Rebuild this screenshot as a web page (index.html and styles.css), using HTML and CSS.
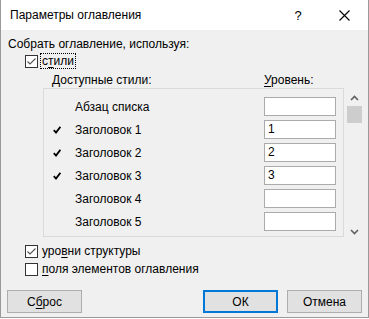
FILE: index.html
```html
<!DOCTYPE html>
<html lang="ru">
<head>
    <meta charset="UTF-8">
    <title>Параметры оглавления</title>
    <link rel="stylesheet" href="styles.css">
</head>
<body>
    <div class="dialog">
        <div class="titlebar">
            <span class="title">Параметры оглавления</span>
            <span class="tb-btn help">?</span>
            <span class="tb-btn close">
                <svg width="11" height="11" viewBox="0 0 11 11"><path d="M0.5 0.5 L10.5 10.5 M10.5 0.5 L0.5 10.5" stroke="#000" stroke-width="1.1" fill="none"/></svg>
            </span>
        </div>

        <div class="content">
            <div class="caption">Собрать оглавление, используя:</div>

            <div class="check-row first">
                <span class="checkbox checked">
                    <svg width="11" height="11" viewBox="0 0 11 11"><path d="M1.5 5.5 L4 8 L9.5 2.5" stroke="#555" stroke-width="1.1" fill="none"/></svg>
                </span>
                <span class="label focus">с<u>т</u>или</span>
            </div>

            <div class="panel-head">
                <span class="head-styles">Доступные стили:</span>
                <span class="head-level"><u>У</u>ровень:</span>
            </div>

            <div class="panel-wrap">
                <div class="panel">
                    <div class="style-row"><span class="mark"></span><span class="name">Абзац списка</span><span class="level"></span></div>
                    <div class="style-row"><span class="mark"><svg width="8" height="8" viewBox="0 0 8 8"><path d="M0.8 4.2 L3 6.6 L7.4 0.8" stroke="#000" stroke-width="1.8" fill="none"/></svg></span><span class="name">Заголовок 1</span><span class="level">1</span></div>
                    <div class="style-row"><span class="mark"><svg width="8" height="8" viewBox="0 0 8 8"><path d="M0.8 4.2 L3 6.6 L7.4 0.8" stroke="#000" stroke-width="1.8" fill="none"/></svg></span><span class="name">Заголовок 2</span><span class="level">2</span></div>
                    <div class="style-row"><span class="mark"><svg width="8" height="8" viewBox="0 0 8 8"><path d="M0.8 4.2 L3 6.6 L7.4 0.8" stroke="#000" stroke-width="1.8" fill="none"/></svg></span><span class="name">Заголовок 3</span><span class="level">3</span></div>
                    <div class="style-row"><span class="mark"></span><span class="name">Заголовок 4</span><span class="level"></span></div>
                    <div class="style-row"><span class="mark"></span><span class="name">Заголовок 5</span><span class="level"></span></div>
                </div>
                <div class="scrollbar">
                    <svg class="arrow" width="9" height="6" viewBox="0 0 9 6"><path d="M1 5 L4.5 1.5 L8 5" stroke="#606060" stroke-width="1.6" fill="none"/></svg>
                    <div class="thumb"></div>
                    <div class="track"></div>
                    <svg class="arrow" width="9" height="6" viewBox="0 0 9 6"><path d="M1 1 L4.5 4.5 L8 1" stroke="#606060" stroke-width="1.6" fill="none"/></svg>
                </div>
            </div>

            <div class="check-row">
                <span class="checkbox checked">
                    <svg width="11" height="11" viewBox="0 0 11 11"><path d="M1.5 5.5 L4 8 L9.5 2.5" stroke="#555" stroke-width="1.1" fill="none"/></svg>
                </span>
                <span class="label">уро<u>в</u>ни структуры</span>
            </div>
            <div class="check-row">
                <span class="checkbox"></span>
                <span class="label"><u>п</u>оля элементов оглавления</span>
            </div>

            <div class="buttons">
                <button class="btn">С<u>б</u>рос</button>
                <span class="spacer"></span>
                <button class="btn default">ОК</button>
                <button class="btn">Отмена</button>
            </div>
        </div>
    </div>
</body>
</html>
```

FILE: styles.css
```css
/* Base */
* {
    margin: 0;
    padding: 0;
    box-sizing: border-box;
}

body {
    font-family: "Liberation Sans", "Segoe UI", sans-serif;
    font-size: 12px;
    color: #000;
    background: #fff;
}

u {
    text-decoration: underline;
    text-underline-offset: 2px;
}

/* Window */
.dialog {
    width: 369px;
    height: 318px;
    background: #f0f0f0;
    border: 1px solid #9a9a9a;
    border-top: none;
    display: flex;
    flex-direction: column;
}

.titlebar {
    height: 30px;
    background: #fff;
    display: flex;
    align-items: center;
}

.title {
    flex: 1;
    padding-left: 9px;
}

.tb-btn {
    display: flex;
    align-items: center;
    justify-content: center;
}

.help {
    width: 20px;
    margin-right: 26px;
    font-size: 13px;
}

.close {
    width: 20px;
    margin-right: 14px;
}

/* Content */
.content {
    flex: 1;
    display: flex;
    flex-direction: column;
}

.caption {
    height: 16px;
    line-height: 16px;
    margin-top: 6px;
    padding-left: 7px;
}

.check-row {
    height: 18px;
    display: flex;
    align-items: center;
    padding-left: 24px;
}

.checkbox {
    width: 13px;
    height: 13px;
    border: 1px solid #333;
    background: #fff;
    display: flex;
    align-items: center;
    justify-content: center;
    margin-right: 4px;
}

.label {
    line-height: 14px;
}

.label.focus {
    margin-left: -2px;
    padding: 0 1px;
    border: 1px dotted #000;
}

/* Styles panel */
.panel-head {
    height: 16px;
    line-height: 16px;
    display: flex;
    margin-top: 2px;
}

.head-styles {
    padding-left: 51px;
    width: 263px;
}

.panel-wrap {
    display: flex;
    margin-left: 42px;
    height: 149px;
}

.panel {
    width: 301px;
    height: 149px;
    border: 1px solid #dadada;
    overflow: hidden;
    padding-top: 8px;
    display: flex;
    flex-direction: column;
    gap: 4px;
}

.style-row {
    display: grid;
    grid-template-columns: 31px 189px 72px;
    height: 19px;
    align-items: center;
    flex-shrink: 0;
}

.mark {
    padding-left: 9px;
    display: flex;
    align-items: center;
}

.level {
    height: 19px;
    background: #fff;
    border: 1px solid #ababab;
    padding-left: 3px;
    line-height: 17px;
}

.scrollbar {
    width: 17px;
    margin-left: 2px;
    display: flex;
    flex-direction: column;
    align-items: center;
    padding-top: 7px;
    padding-bottom: 2px;
}

.arrow {
    flex-shrink: 0;
}

.thumb {
    width: 15px;
    height: 17px;
    background: #cdcdcd;
    margin-top: 5px;
}

.track {
    flex: 1;
}

/* Bottom checkboxes */
.panel-wrap + .check-row {
    margin-top: 5px;
}

/* Buttons */
.buttons {
    display: flex;
    margin-top: 12px;
    padding: 0 6px;
    gap: 9px;
}

.spacer {
    flex: 1;
}

.btn {
    width: 75px;
    height: 23px;
    background: #e1e1e1;
    border: 1px solid #adadad;
    font-family: inherit;
    font-size: 12px;
    color: #000;
}

.btn.default {
    border: 2px solid #0078d7;
}
```
